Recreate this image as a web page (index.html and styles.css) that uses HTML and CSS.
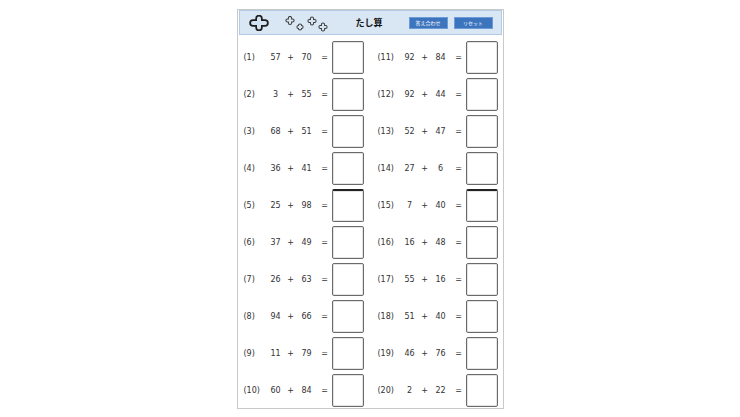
FILE: index.html
```html
<!DOCTYPE html>
<html lang="ja">
  <head>
    <meta charset="UTF-8" />
    <title>たし算</title>
    <link rel="stylesheet" href="styles.css">
  </head>
  <body>
    <div class="sheet">
      <header class="bar">
        <svg class="big-plus" width="20" height="16" viewBox="0 0 20 16">
          <g stroke-linecap="round">
            <path d="M4 8 H16 M10 3.5 V12.5" stroke="#1e1e1e" stroke-width="7.5" />
            <path d="M4 8 H16 M10 3.5 V12.5" stroke="#d3e3f4" stroke-width="4" />
          </g>
        </svg>
        <svg class="small-plus" width="44" height="16" viewBox="0 0 44 16">
          <g stroke-linecap="round">
            <path d="M2.5 4.5 H7.5 M5 2 V7 M13.5 11 H16.5 M15 9.5 V12.5 M24.5 5 H29.5 M27 2.5 V7.5 M35.5 11 H40.5 M38 8.5 V13.5"
              stroke="#3a3a3a" stroke-width="4.2" />
            <path d="M2.5 4.5 H7.5 M5 2 V7 M13.5 11 H16.5 M15 9.5 V12.5 M24.5 5 H29.5 M27 2.5 V7.5 M35.5 11 H40.5 M38 8.5 V13.5"
              stroke="#d6e4f3" stroke-width="2.2" />
          </g>
        </svg>
        <h1 class="title">たし算</h1>
        <div class="actions">
          <button class="btn">答え合わせ</button>
          <button class="btn">リセット</button>
        </div>
      </header>

      <div class="problems">
        <div class="row"><span class="no">(1)</span><span class="n">57</span><span class="op">+</span><span class="n">70</span><span class="op">=</span><span class="ans"></span></div>
        <div class="row"><span class="no">(11)</span><span class="n">92</span><span class="op">+</span><span class="n">84</span><span class="op">=</span><span class="ans"></span></div>
        <div class="row"><span class="no">(2)</span><span class="n">3</span><span class="op">+</span><span class="n">55</span><span class="op">=</span><span class="ans"></span></div>
        <div class="row"><span class="no">(12)</span><span class="n">92</span><span class="op">+</span><span class="n">44</span><span class="op">=</span><span class="ans"></span></div>
        <div class="row"><span class="no">(3)</span><span class="n">68</span><span class="op">+</span><span class="n">51</span><span class="op">=</span><span class="ans"></span></div>
        <div class="row"><span class="no">(13)</span><span class="n">52</span><span class="op">+</span><span class="n">47</span><span class="op">=</span><span class="ans"></span></div>
        <div class="row"><span class="no">(4)</span><span class="n">36</span><span class="op">+</span><span class="n">41</span><span class="op">=</span><span class="ans"></span></div>
        <div class="row"><span class="no">(14)</span><span class="n">27</span><span class="op">+</span><span class="n">6</span><span class="op">=</span><span class="ans"></span></div>
        <div class="row"><span class="no">(5)</span><span class="n">25</span><span class="op">+</span><span class="n">98</span><span class="op">=</span><span class="ans dark"></span></div>
        <div class="row"><span class="no">(15)</span><span class="n">7</span><span class="op">+</span><span class="n">40</span><span class="op">=</span><span class="ans dark"></span></div>
        <div class="row"><span class="no">(6)</span><span class="n">37</span><span class="op">+</span><span class="n">49</span><span class="op">=</span><span class="ans"></span></div>
        <div class="row"><span class="no">(16)</span><span class="n">16</span><span class="op">+</span><span class="n">48</span><span class="op">=</span><span class="ans"></span></div>
        <div class="row"><span class="no">(7)</span><span class="n">26</span><span class="op">+</span><span class="n">63</span><span class="op">=</span><span class="ans"></span></div>
        <div class="row"><span class="no">(17)</span><span class="n">55</span><span class="op">+</span><span class="n">16</span><span class="op">=</span><span class="ans"></span></div>
        <div class="row"><span class="no">(8)</span><span class="n">94</span><span class="op">+</span><span class="n">66</span><span class="op">=</span><span class="ans"></span></div>
        <div class="row"><span class="no">(18)</span><span class="n">51</span><span class="op">+</span><span class="n">40</span><span class="op">=</span><span class="ans"></span></div>
        <div class="row"><span class="no">(9)</span><span class="n">11</span><span class="op">+</span><span class="n">79</span><span class="op">=</span><span class="ans"></span></div>
        <div class="row"><span class="no">(19)</span><span class="n">46</span><span class="op">+</span><span class="n">76</span><span class="op">=</span><span class="ans"></span></div>
        <div class="row"><span class="no">(10)</span><span class="n">60</span><span class="op">+</span><span class="n">84</span><span class="op">=</span><span class="ans"></span></div>
        <div class="row"><span class="no">(20)</span><span class="n">2</span><span class="op">+</span><span class="n">22</span><span class="op">=</span><span class="ans"></span></div>
      </div>
    </div>
  </body>
</html>
```

FILE: styles.css
```css
html,
body {
  margin: 0;
  padding: 0;
  background: #fff;
  font-family: "DejaVu Sans", "Noto Sans CJK JP", sans-serif;
  color: #333;
}
.sheet {
  box-sizing: border-box;
  width: 267px;
  margin: 9px auto 0;
  padding: 0 1px 1px;
  border: 1px solid #c9c9c9;
}
.bar {
  box-sizing: border-box;
  height: 25px;
  display: flex;
  align-items: center;
  padding: 0 8px 0 9px;
  background: #d9e6f4;
  border: 1px solid #b3cae6;
}
.big-plus {
  display: block;
  margin-top: 1px;
}
.small-plus {
  display: block;
  margin-left: 16px;
  margin-top: 2px;
}
.title {
  margin: 0 0 0 27px;
  font-family: "Noto Sans CJK JP", sans-serif;
  font-size: 9px;
  font-weight: bold;
  color: #111;
}
.actions {
  margin-left: auto;
  display: flex;
  gap: 6px;
}
.btn {
  box-sizing: border-box;
  width: 39px;
  height: 12px;
  padding: 0;
  border: 1px solid #6d9bd6;
  background: #3c74be;
  color: #fff;
  font-family: "Noto Sans CJK JP", sans-serif;
  font-size: 5px;
  line-height: 10px;
}
.problems {
  display: grid;
  grid-template-columns: 120px 120px;
  column-gap: 14px;
  row-gap: 4px;
  padding: 6px 0 0 5px;
}
.row {
  display: grid;
  grid-template-columns: 22px 20px 10px 22px 14px 32px;
  align-items: center;
  height: 33px;
  font-size: 8px;
}
.n,
.op {
  text-align: center;
}
.ans {
  box-sizing: border-box;
  height: 33px;
  border: 1px solid #6a6a6a;
  border-radius: 2px;
  background: #fff;
  box-shadow: inset 0 0 0 1px #e4e4e4;
}
.ans.dark {
  border-top: 2px solid #222;
}
```
